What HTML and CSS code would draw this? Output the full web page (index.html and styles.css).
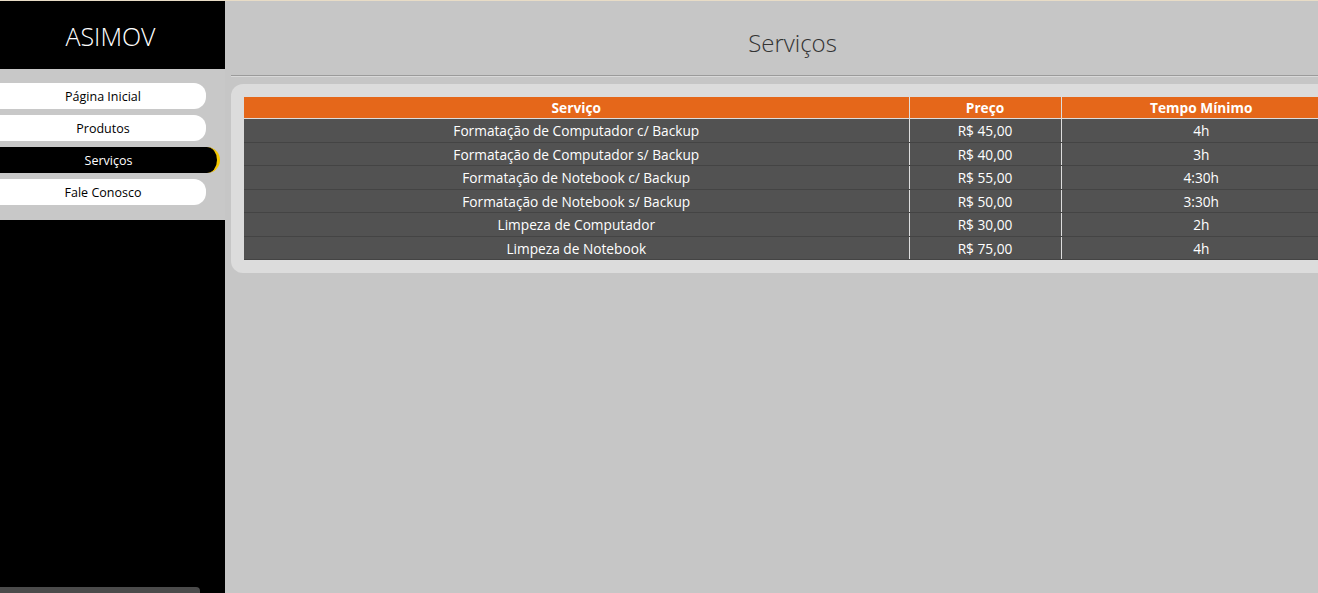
FILE: index.html
```html
<!DOCTYPE html>
<html lang="pt-BR">
<head>
<meta charset="utf-8">
<title>Serviços</title>
<link rel="stylesheet" href="styles.css">
</head>
<body>
<div class="page">
  <aside class="sidebar">
    <div class="brand">ASIMOV</div>
    <nav class="nav">
      <a class="nav-item" href="#">Página Inicial</a>
      <a class="nav-item" href="#">Produtos</a>
      <a class="nav-item active" href="#">Serviços</a>
      <a class="nav-item" href="#">Fale Conosco</a>
    </nav>
    <div class="sidebar-fill"></div>
    <div class="sidebar-foot"></div>
  </aside>
  <main class="main">
    <div class="content">
      <h1 class="title">Serviços</h1>
      <hr class="rule">
      <section class="panel">
        <table class="services">
          <colgroup>
            <col class="c1"><col class="c2"><col class="c3">
          </colgroup>
          <thead>
            <tr><th>Serviço</th><th>Preço</th><th>Tempo Mínimo</th></tr>
          </thead>
          <tbody>
            <tr><td>Formatação de Computador c/ Backup</td><td>R$ 45,00</td><td>4h</td></tr>
            <tr><td>Formatação de Computador s/ Backup</td><td>R$ 40,00</td><td>3h</td></tr>
            <tr><td>Formatação de Notebook c/ Backup</td><td>R$ 55,00</td><td>4:30h</td></tr>
            <tr><td>Formatação de Notebook s/ Backup</td><td>R$ 50,00</td><td>3:30h</td></tr>
            <tr><td>Limpeza de Computador</td><td>R$ 30,00</td><td>2h</td></tr>
            <tr><td>Limpeza de Notebook</td><td>R$ 75,00</td><td>4h</td></tr>
          </tbody>
        </table>
      </section>
    </div>
  </main>
</div>
</body>
</html>
```

FILE: styles.css
```css
* { box-sizing: border-box; }
html, body {
  margin: 0;
  padding: 0;
  height: 100%;
  overflow: hidden;
}
body {
  font-family: "Open Sans", "Noto Sans", sans-serif;
  font-size: 13px;
  background: #c6c6c6;
  border-top: 1px solid #e8dcc6;
}
.page {
  display: flex;
  height: 592px;
}
.sidebar {
  flex: 0 0 225px;
  width: 225px;
  background: #000;
  display: flex;
  flex-direction: column;
}
.brand {
  height: 68px;
  color: #fff;
  font-size: 25px;
  font-weight: 300;
  text-align: center;
  padding-right: 4px;
  line-height: 70px;
}
.nav {
  background: #c8c8c8;
  padding: 14px 0 15px;
  display: flex;
  flex-direction: column;
  gap: 6px;
}
.nav-item {
  display: block;
  width: 206px;
  height: 26px;
  line-height: 28px;
  font-size: 12.5px;
  background: #fff;
  color: #000;
  text-decoration: none;
  text-align: center;
  border-radius: 0 12px 12px 0;
}
.nav-item.active {
  width: 220px;
  background: #000;
  color: #fff;
  border-right: 3px solid #f5c800;
  border-radius: 0 13px 13px 0;
}
.sidebar-fill { flex: 1; }
.sidebar-foot {
  width: 200px;
  height: 6px;
  background: #4b4b4b;
  border-radius: 0 4px 0 0;
}
.main {
  flex: 1;
  min-width: 0;
  padding-left: 6px;
}
.content {
  width: 1123px;
}
.title {
  margin: 0;
  height: 74px;
  padding-top: 26px;
  font-size: 24px;
  font-weight: 300;
  line-height: 32px;
  color: #333;
  text-align: center;
}
.rule {
  margin: 0 0 7px;
  border: 0;
  border-top: 1px solid #9b9b9b;
  border-bottom: 1px solid #d9d9d9;
  height: 2px;
}
.panel {
  background: #dcdcdc;
  border-radius: 12px;
  padding: 13px;
}
.services {
  width: 1097px;
  border-collapse: collapse;
  table-layout: fixed;
  color: #fff;
  font-size: 13.7px;
}
.services .c1 { width: 665px; }
.services .c2 { width: 152px; }
.services .c3 { width: 280px; }
.services th {
  background: #e5671a;
  height: 21px;
  padding: 0;
  font-weight: 700;
  line-height: 21px;
}
.services td {
  background: #525252;
  height: 23.5px;
  padding: 1px 0 0;
  text-align: center;
  line-height: 21px;
  border-top: 1px solid #dddddd;
  border-bottom: 1px solid #444;
}
.services th + th,
.services td + td {
  border-left: 1px solid #dddddd;
}
```
